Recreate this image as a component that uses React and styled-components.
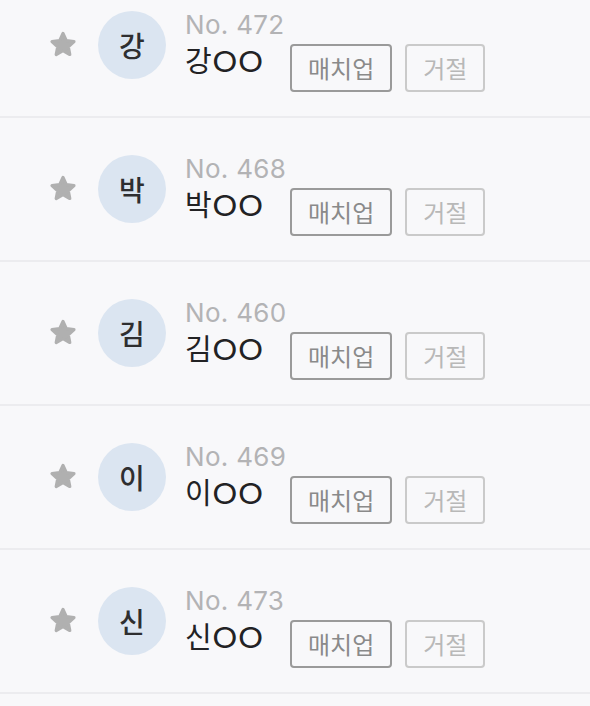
import React from 'react'
import styled, { createGlobalStyle } from 'styled-components'

const GlobalStyle = createGlobalStyle`
  html, body {
    margin: 0;
    padding: 0;
    background: #f8f8fa;
    overflow: hidden;
  }
  body {
    font-family: Inter, "Noto Sans CJK KR", sans-serif;
  }
`

const requests = [
    { family: '강', no: 472 },
    { family: '박', no: 468 },
    { family: '김', no: 460 },
    { family: '이', no: 469 },
    { family: '신', no: 473 },
]

function StarIcon() {
    return (
        <svg width="28" height="27" viewBox="0 0 28 27">
            <path
                d="M14 2.5 L17.3 9.6 L25 10.5 L19.3 15.8 L20.8 23.5 L14 19.7 L7.2 23.5 L8.7 15.8 L3 10.5 L10.7 9.6 Z"
                fill="#b0b0b0"
                stroke="#b0b0b0"
                strokeWidth="3.2"
                strokeLinejoin="round"
            />
        </svg>
    )
}

function RequestRow({ family, no }) {
    return (
        <Row>
            <Star>
                <StarIcon />
            </Star>
            <Avatar>{family}</Avatar>
            <Info>
                <Number>No. {no}</Number>
                <NameLine>
                    <Name>
                        {family}
                        <Masked>OO</Masked>
                    </Name>
                    <Actions>
                        <Button>매치업</Button>
                        <Button muted>거절</Button>
                    </Actions>
                </NameLine>
            </Info>
        </Row>
    )
}

export default function App() {
    return (
        <>
            <GlobalStyle />
            <List>
                {requests.map(r => (
                    <RequestRow key={r.no} {...r} />
                ))}
            </List>
        </>
    )
}

const List = styled.ul`
    list-style: none;
    margin: -26px 0 0;
    padding: 0;
    min-height: 732px;
`

const Row = styled.li`
    height: 142px;
    box-sizing: content-box;
    border-bottom: 2px solid #ececef;
    display: flex;
    align-items: center;
    padding-left: 49px;
`

const Star = styled.div`
    width: 28px;
    height: 27px;
    display: flex;
    margin-top: -2px;
`

const Avatar = styled.div`
    width: 68px;
    height: 68px;
    margin-left: 21px;
    border-radius: 50%;
    background: #dbe5f1;
    color: #2e2e30;
    font-family: "Noto Sans CJK KR", sans-serif;
    font-size: 28px;
    font-weight: 500;
    display: flex;
    align-items: center;
    justify-content: center;
`

const Info = styled.div`
    margin-left: 19px;
    padding-top: 12px;
    display: flex;
    flex-direction: column;
    gap: 4px;
`

const Number = styled.div`
    font-size: 26px;
    line-height: 30px;
    letter-spacing: 0.3px;
    color: #b3b3b5;
`

const NameLine = styled.div`
    display: flex;
    align-items: flex-start;
`

const Name = styled.div`
    font-size: 29px;
    line-height: 36px;
    color: #222224;
    min-width: 82px;
`

const Masked = styled.span`
    display: inline-block;
    font-size: 29px;
    transform: scaleX(1.16);
    transform-origin: left center;
`

const Actions = styled.div`
    display: flex;
    gap: 13px;
    margin-left: 23px;
`

const Button = styled.button`
    height: 48px;
    padding: 0 16px;
    background: transparent;
    border: 2px solid ${p => (p.muted ? '#cacaca' : '#9a9a9a')};
    border-radius: 4px;
    color: ${p => (p.muted ? '#b8b8b8' : '#8a8a8a')};
    font-family: "Noto Sans CJK KR", sans-serif;
    font-size: 24px;
    line-height: 1;
    cursor: pointer;
`
